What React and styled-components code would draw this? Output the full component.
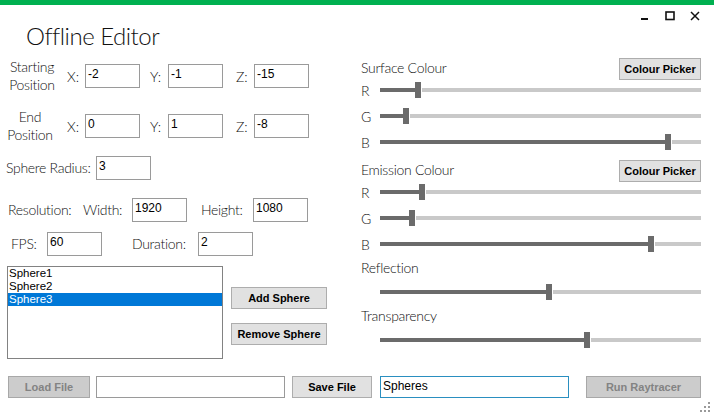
import React from 'react'
import styled, { createGlobalStyle } from 'styled-components'

const GlobalStyle = createGlobalStyle`
  html, body {
    margin: 0;
    padding: 0;
    background: #fff;
  }
  body {
    font-family: "Lato", "Open Sans", sans-serif;
  }
`

const Window = styled.div`
  position: relative;
  width: 714px;
  height: 416px;
  overflow: hidden;
  background: #fff;
  color: #111;
`

const AccentBar = styled.div`
  height: 5px;
  background: #00b050;
`

const Caption = styled.div`
  display: flex;
  justify-content: flex-end;
  align-items: center;
  gap: 15px;
  height: 18px;
  padding: 3px 14px 0 0;
  box-sizing: border-box;

  svg {
    display: block;
  }
`

const Body = styled.div`
  display: flex;
  height: 353px;
`

const LeftColumn = styled.div`
  width: 361px;
  display: flex;
  flex-direction: column;
`

const RightColumn = styled.div`
  width: 340px;
  display: flex;
  flex-direction: column;
  padding-top: 35px;
`

const Title = styled.h1`
  margin: -1px 0 0 26px;
  height: 28px;
  line-height: 27px;
  font-size: 24px;
  font-weight: 300;
  letter-spacing: -0.5px;
  color: #111;
`

const Text = styled.span`
  font-size: 14px;
  font-weight: 300;
  line-height: 18px;
  letter-spacing: -0.3px;
  color: #111;
  white-space: nowrap;
  margin-left: ${p => p.$ml || 0}px;
  width: ${p => (p.$w ? `${p.$w}px` : 'auto')};
`

const PositionGrid = styled.div`
  display: grid;
  grid-template-columns: 52px 27px 55px 28px 55px 31px 55px;
  grid-template-rows: 36px 36px;
  row-gap: 14px;
  align-items: center;
  margin: 8px 0 0 6px;
`

const StackLabel = styled.div`
  font-size: 14px;
  font-weight: 300;
  line-height: 18px;
  letter-spacing: -0.3px;
  text-align: center;
  color: #111;
  transform: translateX(${p => p.$shift || 0}px);
`

const Axis = styled.span`
  justify-self: end;
  width: 18px;
  font-size: 14px;
  font-weight: 300;
  color: #111;
`

const Field = styled.div`
  box-sizing: border-box;
  width: ${p => p.$w || 55}px;
  height: ${p => p.$h || 24}px;
  border: 1px solid ${p => (p.$focus ? '#2a8fc0' : '#9a9a9a')};
  padding: 1px 2px 0;
  font-family: "Liberation Sans", Arial, sans-serif;
  font-size: 12px;
  line-height: 16px;
  color: #000;
  background: #fff;
  margin-left: ${p => p.$ml || 0}px;
`

const Row = styled.div`
  display: flex;
  align-items: center;
  height: 24px;
  margin-top: ${p => p.$mt || 0}px;
`

const ListArea = styled.div`
  display: flex;
  margin: 10px 0 0 7px;
`

const ListBox = styled.div`
  box-sizing: border-box;
  width: 216px;
  height: 93px;
  border: 1px solid #828282;
  font-family: "Liberation Sans", Arial, sans-serif;
  font-size: 11.5px;
`

const ListItem = styled.div`
  height: 13px;
  line-height: 13px;
  padding-left: 1px;
  background: ${p => (p.$selected ? '#0078d7' : 'transparent')};
  color: ${p => (p.$selected ? '#fff' : '#000')};
`

const ButtonStack = styled.div`
  display: flex;
  flex-direction: column;
  gap: 14px;
  padding: 21px 0 0 8px;
`

const Button = styled.div`
  box-sizing: border-box;
  width: ${p => p.$w}px;
  height: ${p => p.$h || 22}px;
  display: flex;
  align-items: center;
  justify-content: center;
  background: ${p => (p.$disabled ? '#cccccc' : '#e1e1e1')};
  border: 1px solid ${p => (p.$disabled ? '#a8a8a8' : '#adadad')};
  color: ${p => (p.$disabled ? '#838383' : '#000')};
  font-family: "Liberation Sans", Arial, sans-serif;
  font-weight: bold;
  font-size: 11px;
  margin-left: ${p => p.$ml || 0}px;
`

const SectionHeader = styled.div`
  display: flex;
  justify-content: space-between;
  align-items: center;
  height: 22px;
  margin: ${p => p.$mt || 0}px 0 -3px;

  span {
    margin-top: -2px;
  }
`

const PlainLabel = styled.div`
  height: 19px;
  line-height: 15px;
  font-size: 14px;
  font-weight: 300;
  letter-spacing: -0.3px;
  color: #111;
  margin-top: 3px;
`

const SliderRow = styled.div`
  display: flex;
  align-items: center;
  height: 26px;
`

const SliderLetter = styled.span`
  width: 19px;
  font-size: 14px;
  font-weight: 300;
  color: #111;
`

const Track = styled.div`
  flex: 1;
  display: flex;
  align-items: center;
  height: 16px;
`

const TrackFill = styled.div`
  height: 4px;
  background: #6b6b6b;
`

const Thumb = styled.div`
  width: 6px;
  height: 16px;
  background: #6b6b6b;
`

const TrackRest = styled.div`
  flex: 1;
  height: 4px;
  background: #c9c9c9;
  margin-left: 1px;
`

const Footer = styled.div`
  display: flex;
  align-items: center;
  height: 22px;
  padding-left: 8px;
`

const Grip = styled.svg`
  position: absolute;
  right: 4px;
  bottom: 4px;
`

const Slider = ({ letter, offset }) => (
  <SliderRow>
    <SliderLetter>{letter}</SliderLetter>
    <Track>
      <TrackFill style={{ width: offset }} />
      <Thumb />
      <TrackRest />
    </Track>
  </SliderRow>
)

const WindowButtons = () => (
  <Caption>
    <svg width="10" height="10" viewBox="0 0 10 10">
      <rect x="1" y="7" width="7" height="2" fill="#111" />
    </svg>
    <svg width="10" height="10" viewBox="0 0 10 10">
      <rect x="1" y="1" width="8" height="7.5" fill="none" stroke="#111" strokeWidth="1.6" />
    </svg>
    <svg width="10" height="10" viewBox="0 0 10 10">
      <path d="M1 1 L9 9 M9 1 L1 9" stroke="#111" strokeWidth="1.5" />
    </svg>
  </Caption>
)

const App = () => {
  return (
    <Window>
      <GlobalStyle />
      <AccentBar />
      <WindowButtons />
      <Body>
        <LeftColumn>
          <Title>Offline Editor</Title>

          <PositionGrid>
            <StackLabel>Starting<br />Position</StackLabel>
            <Axis>X:</Axis>
            <Field>-2</Field>
            <Axis>Y:</Axis>
            <Field>-1</Field>
            <Axis>Z:</Axis>
            <Field>-15</Field>

            <StackLabel $shift={-2}>End<br />Position</StackLabel>
            <Axis>X:</Axis>
            <Field>0</Field>
            <Axis>Y:</Axis>
            <Field>1</Field>
            <Axis>Z:</Axis>
            <Field>-8</Field>
          </PositionGrid>

          <Row $mt={12}>
            <Text $ml={6} $w={90}>Sphere Radius:</Text>
            <Field>3</Field>
          </Row>

          <Row $mt={18}>
            <Text $ml={8} $w={75}>Resolution:</Text>
            <Text $w={49}>Width:</Text>
            <Field>1920</Field>
            <Text $ml={14} $w={52}>Height:</Text>
            <Field>1080</Field>
          </Row>

          <Row $mt={10}>
            <Text $ml={11} $w={36}>FPS:</Text>
            <Field>60</Field>
            <Text $ml={30} $w={66}>Duration:</Text>
            <Field>2</Field>
          </Row>

          <ListArea>
            <ListBox>
              <ListItem>Sphere1</ListItem>
              <ListItem>Sphere2</ListItem>
              <ListItem $selected>Sphere3</ListItem>
            </ListBox>
            <ButtonStack>
              <Button $w={96} $h={22}>Add Sphere</Button>
              <Button $w={96} $h={22}>Remove Sphere</Button>
            </ButtonStack>
          </ListArea>
        </LeftColumn>

        <RightColumn>
          <SectionHeader>
            <Text>Surface Colour</Text>
            <Button $w={82}>Colour Picker</Button>
          </SectionHeader>
          <Slider letter="R" offset={35} />
          <Slider letter="G" offset={23} />
          <Slider letter="B" offset={285} />

          <SectionHeader $mt={5}>
            <Text>Emission Colour</Text>
            <Button $w={82}>Colour Picker</Button>
          </SectionHeader>
          <Slider letter="R" offset={39} />
          <Slider letter="G" offset={29} />
          <Slider letter="B" offset={268} />

          <PlainLabel>Reflection</PlainLabel>
          <Slider offset={166} />
          <PlainLabel>Transparency</PlainLabel>
          <Slider offset={204} />
        </RightColumn>
      </Body>

      <Footer>
        <Button $w={82} $disabled>Load File</Button>
        <Field $w={189} $h={22} $ml={6} />
        <Button $w={80} $ml={7}>Save File</Button>
        <Field $w={189} $h={22} $ml={8} $focus>Spheres</Field>
        <Button $w={115} $ml={17} $disabled>Run Raytracer</Button>
      </Footer>

      <Grip width="10" height="10" viewBox="0 0 10 10">
        <rect x="8" y="0" width="2" height="2" fill="#9a9a9a" />
        <rect x="4" y="4" width="2" height="2" fill="#9a9a9a" />
        <rect x="8" y="4" width="2" height="2" fill="#9a9a9a" />
        <rect x="0" y="8" width="2" height="2" fill="#9a9a9a" />
        <rect x="4" y="8" width="2" height="2" fill="#9a9a9a" />
        <rect x="8" y="8" width="2" height="2" fill="#9a9a9a" />
      </Grip>
    </Window>
  )
}

export default App
